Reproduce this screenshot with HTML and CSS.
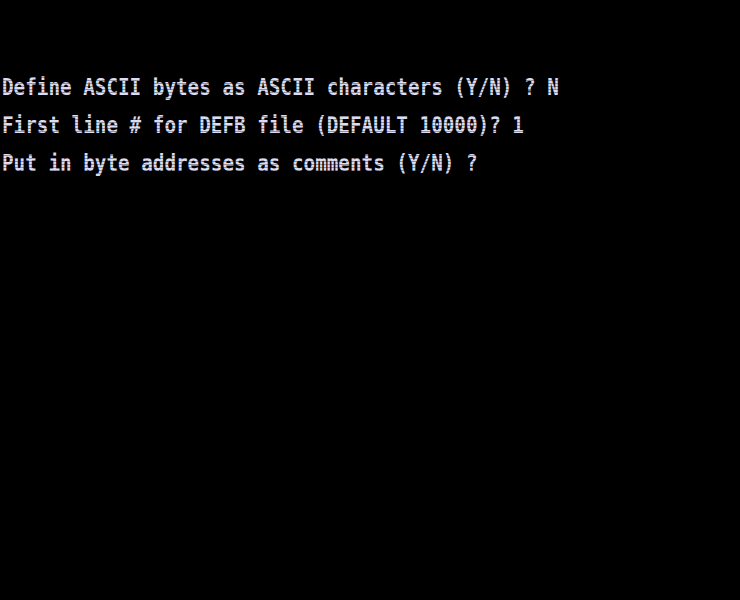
FILE: index.html
```html
<!DOCTYPE html>
<html>
<head>
<meta charset="utf-8">
<link rel="stylesheet" href="styles.css">
</head>
<body>
<div class="screen">
  <div class="text">
    <div class="line">Define ASCII bytes as ASCII characters (Y/N) ? N</div>
    <div class="line">First line # for DEFB file (DEFAULT 10000)? 1</div>
    <div class="line">Put in byte addresses as comments (Y/N) ?</div>
  </div>
  <div class="scan"></div>
</div>
</body>
</html>
```
FILE: styles.css
```css
html, body {
  margin: 0;
  padding: 0;
  background: #000;
}
.screen {
  position: relative;
  width: 740px;
  height: 600px;
  background: #000;
  overflow: hidden;
  padding-top: 69px;
  box-sizing: border-box;
}
.text {
  transform: scaleY(1.2);
  transform-origin: 0 0;
  font-family: "DejaVu Sans Mono", monospace;
  font-size: 19.27px;
  font-weight: bold;
  line-height: 31.25px;
  color: #dcdcf2;
  padding-left: 2px;
}
.line {
  white-space: pre;
  height: 31.25px;
}
.scan {
  position: absolute;
  inset: 0;
  background: repeating-linear-gradient(to bottom, rgba(0,0,0,0) 0, rgba(0,0,0,0) 2px, rgba(0,0,0,0.35) 2px, rgba(0,0,0,0.35) 3px);
  pointer-events: none;
}
```
